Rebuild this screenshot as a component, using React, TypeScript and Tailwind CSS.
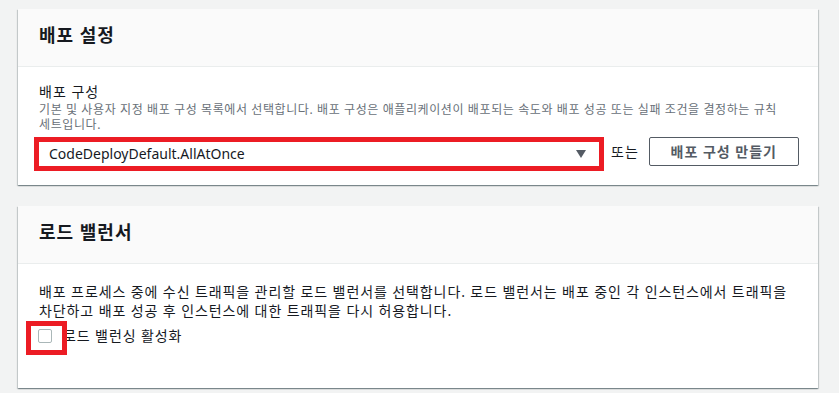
import React from "react";

// TYPES
type SectionProps = {
  title: string;
  bodyClassName: string;
  children: React.ReactNode;
};

const Section = ({ title, bodyClassName, children }: SectionProps) => {
  return (
    <section className="bg-white shadow-[0_1px_1px_0_rgba(0,28,36,0.3),1px_1px_1px_0_rgba(0,28,36,0.15),-1px_1px_1px_0_rgba(0,28,36,0.15)]">
      {/* HEADER */}
      <div className="flex h-[58px] items-center border-b border-[#eaeded] bg-[#fafafa] px-[21px] pb-[6px]">
        <h2 className="text-[18px] font-bold leading-[22px] tracking-[1px] text-[#16191f]">{title}</h2>
      </div>
      {/* BODY */}
      <div className={bodyClassName}>{children}</div>
    </section>
  );
};

const App = () => {
  return (
    <div className="min-h-[393px] bg-[#f2f3f3] pl-[18px] pt-[9px] font-['Noto_Sans','Noto_Sans_CJK_KR',sans-serif] text-[#16191f]">
      <div className="flex w-[800px] flex-col gap-[21px]">
        {/* DEPLOYMENT SETTINGS */}
        <Section title="배포 설정" bodyClassName="px-[21px] pt-[15px] pb-[14px]">
          <div className="text-[14px] leading-[20px] tracking-[1px]">배포 구성</div>
          <p className="text-[12px] leading-[15px] tracking-[0.6px] text-[#687078]">
            기본 및 사용자 지정 배포 구성 목록에서 선택합니다. 배포 구성은 애플리케이션이 배포되는 속도와 배포 성공 또는 실패 조건을 결정하는 규칙
            <br />
            세트입니다.
          </p>
          <div className="mt-[5px] flex items-start">
            {/* SELECT */}
            <div className="ml-[-5px] flex h-[34px] w-[570px] shrink-0 items-center justify-between border-[5px] border-[#ec1c24] bg-white pl-[10px] pr-[13px]">
              <span className="text-[14px] leading-[20px] text-[#16191f]">CodeDeployDefault.AllAtOnce</span>
              <svg width="10" height="8" viewBox="0 0 10 8" className="text-[#545b64]">
                <path d="M0 0 H10 L5 8 Z" fill="currentColor" />
              </svg>
            </div>
            <span className="ml-[7px] flex h-[29px] shrink-0 items-center whitespace-nowrap text-[14px] tracking-[1px]">또는</span>
            {/* CREATE BUTTON */}
            <button className="ml-[10px] h-[29px] w-[150px] shrink-0 whitespace-nowrap rounded-[2px] border border-[#545b64] bg-white text-[14px] font-bold tracking-[1px] text-[#545b64]">
              배포 구성 만들기
            </button>
          </div>
        </Section>

        {/* LOAD BALANCER */}
        <Section title="로드 밸런서" bodyClassName="px-[21px] pt-[18px] pb-[42px]">
          <p className="text-[14px] leading-[19px] tracking-[0.9px]">
            배포 프로세스 중에 수신 트래픽을 관리할 로드 밸런서를 선택합니다. 로드 밸런서는 배포 중인 각 인스턴스에서 트래픽을
            <br />
            차단하고 배포 성공 후 인스턴스에 대한 트래픽을 다시 허용합니다.
          </p>
          <div className="relative mt-[6px] flex h-[20px] items-center">
            <span className="ml-[-1px] h-[14px] w-[14px] rounded-[2px] border border-[#aab7b8] bg-white" />
            <span className="ml-[11px] text-[14px] leading-[20px] tracking-[0.9px]">로드 밸런싱 활성화</span>
            {/* HIGHLIGHT */}
            <span className="absolute left-[-13px] top-[-5px] h-[34px] w-[41px] border-[5px] border-[#ec1c24]" />
          </div>
        </Section>
      </div>
    </div>
  );
};

export default App;
